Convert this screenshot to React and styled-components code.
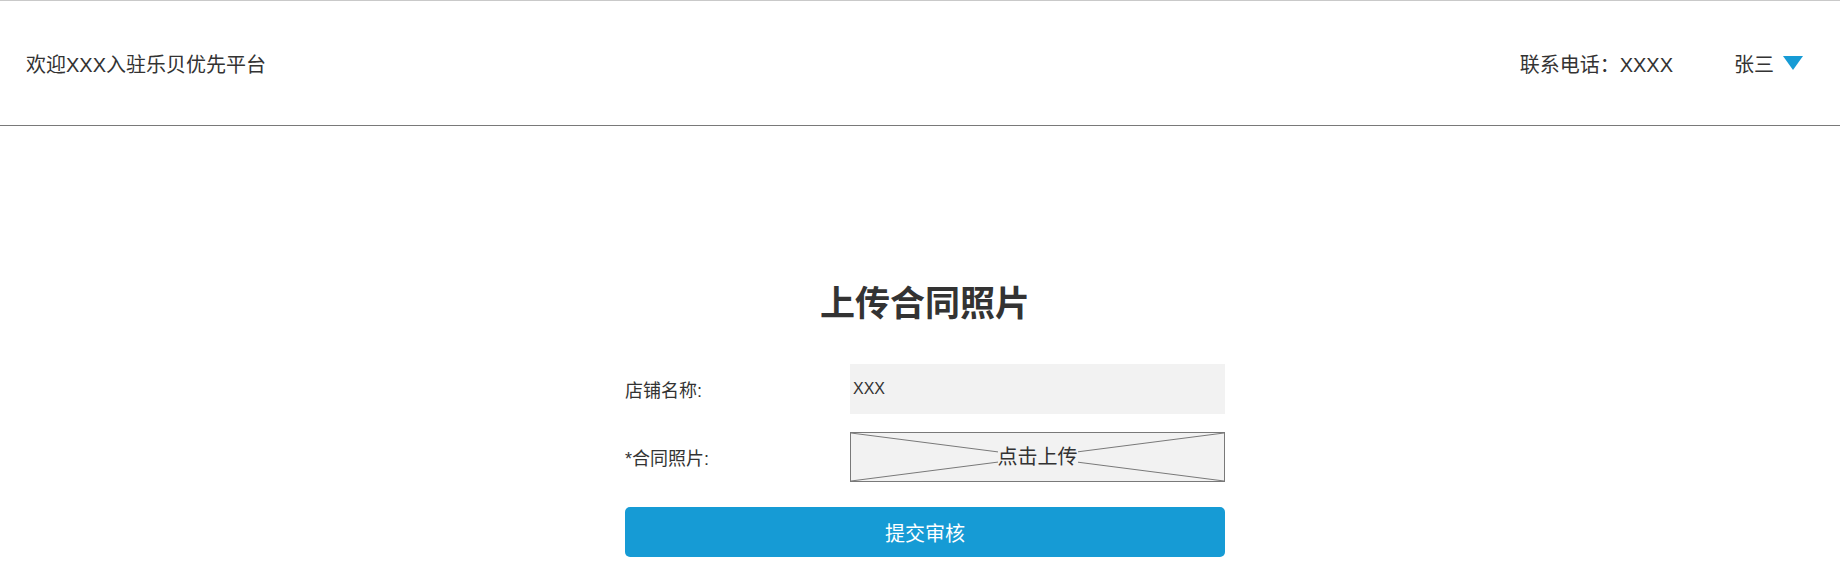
import React from 'react';
import styled, { createGlobalStyle } from 'styled-components';

const GlobalStyle = createGlobalStyle`
  html, body {
    margin: 0;
    padding: 0;
    background: #fff;
  }
  body {
    font-family: "Liberation Sans", "Noto Sans CJK SC", sans-serif;
    color: #333;
  }
  #root {
    min-height: 580px;
  }
`;

const Header = styled.header`
  display: flex;
  align-items: center;
  justify-content: space-between;
  height: 124px;
  padding: 0 37px 0 26px;
  border-top: 1px solid #c9c9c9;
  border-bottom: 1px solid #797979;
  font-size: 20px;
  line-height: 24px;
  color: #333;
`;

const Welcome = styled.div`
  padding-top: 4px;
`;

const HeaderRight = styled.div`
  display: flex;
  align-items: center;
  gap: 61px;
  padding-top: 4px;
`;

const User = styled.div`
  display: flex;
  align-items: center;
  gap: 9px;
`;

const Caret = styled.span`
  display: block;
  width: 0;
  height: 0;
  margin-top: -4px;
  border-left: 10px solid transparent;
  border-right: 10px solid transparent;
  border-top: 14px solid #169bd5;
`;

const Main = styled.main`
  display: flex;
  flex-direction: column;
  align-items: center;
  padding: 160px 0 0 10px;
`;

const Title = styled.h1`
  margin: 0 0 42px;
  font-size: 35px;
  line-height: 36px;
  font-weight: 700;
  color: #333;
`;

const Form = styled.div`
  display: grid;
  grid-template-columns: 225px 375px;
  grid-auto-rows: 50px;
  row-gap: 18px;
  width: 600px;
`;

const Label = styled.div`
  display: flex;
  align-items: center;
  font-size: 18px;
  color: #333;
`;

const TextField = styled.div`
  display: flex;
  align-items: center;
  padding-left: 3px;
  background: #f2f2f2;
  font-size: 16px;
  color: #333;
`;

const Upload = styled.div`
  position: relative;
  display: flex;
  align-items: center;
  justify-content: center;
  box-sizing: border-box;
  border: 1px solid #797979;
  background: #f2f2f2;
  cursor: pointer;
`;

const Cross = styled.svg`
  position: absolute;
  inset: 0;
  width: 100%;
  height: 100%;
`;

const UploadText = styled.span`
  position: relative;
  background: #f2f2f2;
  font-size: 20px;
  line-height: 22px;
  color: #333;
`;

const Submit = styled.button`
  display: block;
  width: 600px;
  height: 50px;
  margin-top: 25px;
  border: none;
  border-radius: 5px;
  background: #169bd5;
  color: #fff;
  font-family: inherit;
  font-size: 20px;
  cursor: pointer;
`;

const App = () => (
  <>
    <GlobalStyle />
    <Header>
      <Welcome>欢迎XXX入驻乐贝优先平台</Welcome>
      <HeaderRight>
        <span>联系电话：XXXX</span>
        <User>
          <span>张三</span>
          <Caret />
        </User>
      </HeaderRight>
    </Header>
    <Main>
      <Title>上传合同照片</Title>
      <Form>
        <Label>店铺名称:</Label>
        <TextField>XXX</TextField>
        <Label>*合同照片:</Label>
        <Upload>
          <Cross preserveAspectRatio="none" viewBox="0 0 100 100">
            <line x1="0" y1="0" x2="100" y2="100" stroke="#797979" strokeWidth="1" vectorEffect="non-scaling-stroke" />
            <line x1="0" y1="100" x2="100" y2="0" stroke="#797979" strokeWidth="1" vectorEffect="non-scaling-stroke" />
          </Cross>
          <UploadText>点击上传</UploadText>
        </Upload>
      </Form>
      <Submit>提交审核</Submit>
    </Main>
  </>
);

export default App;
